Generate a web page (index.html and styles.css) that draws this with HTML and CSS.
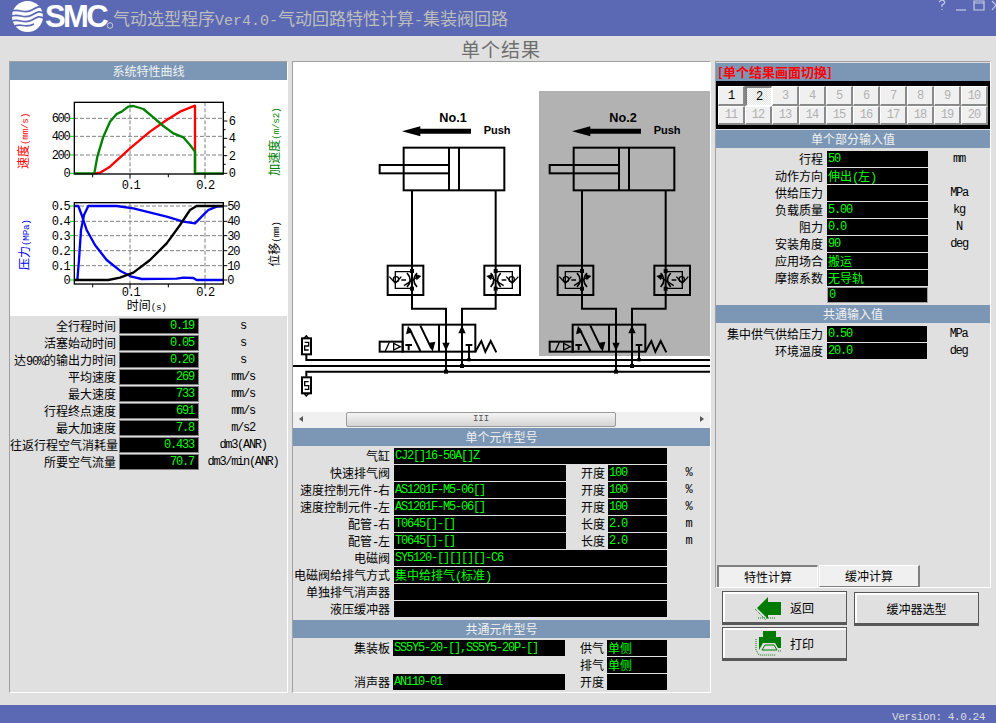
FILE: index.html
```html
<!DOCTYPE html>
<html lang="zh">
<head>
<meta charset="utf-8">
<title>气动选型程序</title>
<link rel="stylesheet" href="styles.css">
</head>
<body>
<header class="titlebar">
  <svg class="logo" width="114" height="34" viewBox="0 0 114 34">
    <circle cx="27.5" cy="16.5" r="15.5" fill="#fff"/>
    <path d="M10 12C18 7 24 15 32 10S40 7 44 8M10 17C18 12 24 20 32 15S40 12 44 13M10 22C18 17 24 25 32 20S40 17 44 18M13 27C20 22 26 29 34 24" fill="none" stroke="#5b69b5" stroke-width="1.7"/>
    <text class="logo-t" x="45" y="27">SMC</text>
    <circle cx="110" cy="25.5" r="2.8" fill="none" stroke="#ccc"/>
  </svg>
  <h1 class="apptitle">气动选型程序<span class="t-l">Ver4.0-</span>气动回路特性计算<span class="t-l">-</span>集装阀回路</h1>
  <svg class="winctl" width="58" height="12" viewBox="0 0 58 12">
    <g fill="none" stroke="#c4cbe6" stroke-width="1.2">
      <path d="M1 2Q4-1 6 1T4 5V7M4 9V10"/>
      <path d="M18 10H28"/>
      <path d="M36 1H46V10H36ZM36 3H46"/>
      <path d="M54 1L58 5M54 10L58 5"/>
    </g>
  </svg>
</header>
<div class="pagetitle">单个结果</div>
<main class="layout">
  <section class="panel">
    <div class="head">系统特性曲线</div>
    <svg class="charts" width="277" height="236" viewBox="30 60 831 708">
      <rect x="30" y="60" width="831" height="708" fill="#fff"/>
      <g class="grid">
        <path d="M222 175H670M222 229H670M222 285H670M390 127V342M615 127V342"/>
        <path d="M222 438H670M222 484H670M222 527H670M222 572H670M222 617H670M390 428V672M615 428V672"/>
      </g>
      <path class="greentick" d="M210 175H222M210 229H222M210 285H222M210 340H222M210 438H222M210 484H222M210 527H222M210 572H222M210 617H222M210 660H222"/>
      <path class="blacktick" d="M670 183H682M670 235H682M670 287H682M670 340H682M670 157H677M670 209H677M670 261H677M670 313H677M278 342V352M390 342V356M505 342V352M615 342V356M670 438H682M670 484H682M670 527H682M670 572H682M670 617H682M670 660H682M278 672V682M390 672V686M505 672V682M615 672V686"/>
      <polyline class="c-red" points="285,340 300,338 330,320 390,265 450,215 500,180 540,155 585,137 585,340"/>
      <polyline class="c-green" points="222,340 283,340 292,290 310,230 330,185 350,162 365,155 385,140 400,138 430,147 460,172 490,198 520,220 550,232 570,255 585,275 585,340 670,340"/>
      <rect class="frame" x="223" y="127" width="447" height="215"/>
      <polyline class="c-blue" points="222,438 235,438 245,465 260,510 285,555 320,600 360,632 395,650 425,657 530,656 550,653 580,654 590,660 670,660"/>
      <polyline class="c-blue" points="232,660 237,600 243,510 252,465 265,438 350,438 400,445 500,470 550,485 585,490 605,470 625,450 650,440 670,438"/>
      <polyline class="c-black" points="222,660 325,660 360,653 400,638 450,600 500,550 540,495 570,450 590,438 670,438"/>
      <rect class="frame" x="223" y="428" width="447" height="244"/>
      <g class="tk" text-anchor="end">
        <text x="208" y="187">600</text><text x="208" y="241">400</text><text x="208" y="297">200</text><text x="208" y="352">0</text>
        <text x="208" y="450">0.5</text><text x="208" y="496">0.4</text><text x="208" y="539">0.3</text><text x="208" y="584">0.2</text><text x="208" y="629">0.1</text><text x="208" y="672">0</text>
      </g>
      <g class="tk">
        <text x="686" y="195">6</text><text x="686" y="247">4</text><text x="686" y="299">2</text><text x="686" y="352">0</text>
        <text x="682" y="450">50</text><text x="682" y="496">40</text><text x="682" y="539">30</text><text x="682" y="584">20</text><text x="682" y="629">10</text><text x="682" y="672">0</text>
      </g>
      <g class="tk" text-anchor="middle">
        <text x="392" y="388">0.1</text><text x="615" y="388">0.2</text>
        <text x="392" y="707">0.1</text><text x="615" y="707">0.2</text>
      </g>
      <text class="axis red" transform="translate(84,327) rotate(-90)">速度<tspan class="ax-l">(mm/s)</tspan></text>
      <text class="axis green" transform="translate(836,347) rotate(-90)">加速度<tspan class="ax-l">(m/s2)</tspan></text>
      <text class="axis blue" transform="translate(86,630) rotate(-90)">压力<tspan class="ax-l">(MPa)</tspan></text>
      <text class="axis" transform="translate(836,620) rotate(-90)">位移<tspan class="ax-l">(mm)</tspan></text>
      <text class="axis" x="380" y="750">时间<tspan class="ax-l">(s)</tspan></text>
    </svg>
    <div class="rows left">
      <div class="row"><span class="lbl">全行程时间</span><span class="box r">0.19</span><span class="unit">s</span></div>
      <div class="row"><span class="lbl">活塞始动时间</span><span class="box r">0.05</span><span class="unit">s</span></div>
      <div class="row"><span class="lbl">达<span class="mn">90%</span>的输出力时间</span><span class="box r">0.20</span><span class="unit">s</span></div>
      <div class="row"><span class="lbl">平均速度</span><span class="box r">269</span><span class="unit">mm/s</span></div>
      <div class="row"><span class="lbl">最大速度</span><span class="box r">733</span><span class="unit">mm/s</span></div>
      <div class="row"><span class="lbl">行程终点速度</span><span class="box r">691</span><span class="unit">mm/s</span></div>
      <div class="row"><span class="lbl">最大加速度</span><span class="box r">7.8</span><span class="unit">m/s2</span></div>
      <div class="row"><span class="lbl">往返行程空气消耗量</span><span class="box r">0.433</span><span class="unit">dm3(ANR)</span></div>
      <div class="row"><span class="lbl">所要空气流量</span><span class="box r">70.7</span><span class="unit">dm3/min(ANR)</span></div>
    </div>
  </section>

  <section class="panel">
    <svg class="diagram" width="417" height="350" viewBox="3 -69 1251 1050">
      <defs>
        <g id="ctrl">
          <rect x="287" y="542" width="107" height="88"/>
          <path d="M360 560H310V610H360" class="thin"/>
          <path d="M292 575L310 595L328 575" class="thin"/>
          <circle cx="312" cy="583" r="8" class="thin"/>
          <path d="M328 585H342M345 564Q364 585 345 606M375 564Q356 585 375 606" class="med"/>
          <path d="M336 602L376 576" class="thin"/>
          <path d="M388 573L368 566L374 586Z" class="fill"/>
          <rect x="354" y="552" width="12" height="12" class="fill"/>
          <rect x="354" y="605" width="12" height="12" class="fill"/>
        </g>
        <g id="unit">
          <path d="M370 139H537" class="bold"/>
          <path d="M330 139L385 124V154Z" class="fill"/>
          <rect x="335" y="188" width="302" height="128"/>
          <path d="M471 188V316M501 188V316"/>
          <rect x="263" y="240" width="208" height="25"/>
          <path d="M360 316V671H462V860M611 316V671H510V843"/>
          <use href="#ctrl"/>
          <use href="#ctrl" transform="translate(971,0) scale(-1,1)"/>
          <rect x="332" y="719" width="218" height="81"/>
          <path d="M441 719V800"/>
          <path d="M352 730L385 798M385 722L418 790M350 778V796M340 780H360"/>
          <path d="M348 722L342 748L362 742Z" class="fill"/>
          <path d="M422 800L408 774L430 770Z" class="fill"/>
          <path d="M451 773H473L462 798Z" class="fill"/>
          <path d="M499 745H521L510 721Z" class="fill"/>
          <path d="M531 780V825M521 780H541"/>
          <rect x="263" y="770" width="69" height="30"/>
          <path d="M280 798L292 772M305 775L325 785L305 795Z" class="thin"/>
          <path d="M550 800L568 768L580 800L596 768L613 802"/>
          <rect x="456" y="854" width="12" height="12" class="fill"/>
          <rect x="504" y="837" width="12" height="12" class="fill"/>
          <rect x="526" y="819" width="10" height="10" class="fill"/>
        </g>
        <g id="muffler">
          <rect x="30" y="760" width="27" height="48"/>
          <path d="M43 752L36 760H50ZM38 772H50V783H38V795H50" class="thin"/>
        </g>
      </defs>
      <rect x="3" y="-69" width="1251" height="1050" fill="#fff"/>
      <rect x="741" y="18" width="513" height="795" fill="#b2b2b2"/>
      <g class="dg">
        <use href="#unit"/>
        <use href="#unit" x="510"/>
        <path d="M3 843H1254M43 808V825H1254M43 875V860H1254"/>
        <use href="#muffler"/>
        <use href="#muffler" transform="translate(0,1685) scale(1,-1)"/>
      </g>
      <text class="dno" x="442" y="110">No.1</text>
      <text class="dpush" x="575" y="148">Push</text>
      <text class="dno" x="952" y="110">No.2</text>
      <text class="dpush" x="1085" y="148">Push</text>
    </svg>
    <div class="scroll">
      <span class="arr arr-l"></span>
      <div class="thumb">III</div>
      <span class="arr arr-r"></span>
    </div>
    <div class="head">单个元件型号</div>
    <div class="rows mid">
      <div class="row"><span class="lbl">气缸</span><span class="box long">CJ2[]16-50A[]Z</span></div>
      <div class="row"><span class="lbl">快速排气阀</span><span class="box short"></span><span class="lbl2">开度</span><span class="box s2">100</span><span class="unit">%</span></div>
      <div class="row"><span class="lbl">速度控制元件<span class="mn">-</span>右</span><span class="box short">AS1201F-M5-06[]</span><span class="lbl2">开度</span><span class="box s2">100</span><span class="unit">%</span></div>
      <div class="row"><span class="lbl">速度控制元件<span class="mn">-</span>左</span><span class="box short">AS1201F-M5-06[]</span><span class="lbl2">开度</span><span class="box s2">100</span><span class="unit">%</span></div>
      <div class="row"><span class="lbl">配管<span class="mn">-</span>右</span><span class="box short">T0645[]-[]</span><span class="lbl2">长度</span><span class="box s2">2.0</span><span class="unit">m</span></div>
      <div class="row"><span class="lbl">配管<span class="mn">-</span>左</span><span class="box short">T0645[]-[]</span><span class="lbl2">长度</span><span class="box s2">2.0</span><span class="unit">m</span></div>
      <div class="row"><span class="lbl">电磁阀</span><span class="box long">SY5120-[][][][]-C6</span></div>
      <div class="row"><span class="lbl">电磁阀给排气方式</span><span class="box long cn">集中给排气<span class="mn">(</span>标准<span class="mn">)</span></span></div>
      <div class="row"><span class="lbl">单独排气消声器</span><span class="box long"></span></div>
      <div class="row"><span class="lbl">液压缓冲器</span><span class="box long"></span></div>
    </div>
    <div class="head head-gap">共通元件型号</div>
    <div class="rows mid common">
      <div class="row"><span class="lbl">集装板</span><span class="box short">SS5Y5-20-[],SS5Y5-20P-[]</span><span class="lbl2">供气</span><span class="box s2 cn">单侧</span></div>
      <div class="row"><span class="lbl"></span><span class="blank"></span><span class="lbl2">排气</span><span class="box s2 cn">单侧</span></div>
      <div class="row"><span class="lbl">消声器</span><span class="box short">AN110-01</span><span class="lbl2">开度</span><span class="box s2"></span></div>
    </div>
  </section>

  <div class="rightcol">
    <section class="panel panel-r">
      <div class="redhead">[单个结果画面切换]</div>
      <div class="switch">
        <button class="num on">1</button><button class="num on pressed">2</button><button class="num">3</button><button class="num">4</button><button class="num">5</button><button class="num">6</button><button class="num">7</button><button class="num">8</button><button class="num">9</button><button class="num">10</button>
        <button class="num">11</button><button class="num">12</button><button class="num">13</button><button class="num">14</button><button class="num">15</button><button class="num">16</button><button class="num">17</button><button class="num">18</button><button class="num">19</button><button class="num">20</button>
      </div>
      <div class="head">单个部分输入值</div>
      <div class="rows right">
        <div class="row"><span class="lbl">行程</span><span class="box">50</span><span class="unit">mm</span></div>
        <div class="row"><span class="lbl">动作方向</span><span class="box cn">伸出<span class="mn">(</span>左<span class="mn">)</span></span></div>
        <div class="row"><span class="lbl">供给压力</span><span class="box"></span><span class="unit">MPa</span></div>
        <div class="row"><span class="lbl">负载质量</span><span class="box">5.00</span><span class="unit">kg</span></div>
        <div class="row"><span class="lbl">阻力</span><span class="box">0.0</span><span class="unit">N</span></div>
        <div class="row"><span class="lbl">安装角度</span><span class="box">90</span><span class="unit">deg</span></div>
        <div class="row"><span class="lbl">应用场合</span><span class="box cn">搬运</span></div>
        <div class="row"><span class="lbl">摩擦系数</span><span class="box cn">无导轨</span></div>
        <div class="row"><span class="lbl"></span><span class="box inset">0</span></div>
      </div>
      <div class="head">共通输入值</div>
      <div class="rows right common-r">
        <div class="row"><span class="lbl">集中供气供给压力</span><span class="box b100">0.50</span><span class="unit">MPa</span></div>
        <div class="row"><span class="lbl">环境温度</span><span class="box b100">20.0</span><span class="unit">deg</span></div>
      </div>
      <div class="tabs">
        <button class="tab pressed">特性计算</button>
        <button class="tab">缓冲计算</button>
      </div>
    </section>
    <div class="actions">
      <div class="actcol">
        <button class="act">
          <svg width="28" height="26" viewBox="0 0 28 26">
            <path d="M3 14L14 3V8H27V21H14V25Z" fill="#007a00"/>
            <path d="M1 15L13 27M4 24H22" stroke="#007a00" stroke-dasharray="1 1" fill="none"/>
          </svg>
          <span>返回</span>
        </button>
        <button class="act">
          <svg width="28" height="26" viewBox="0 0 28 26">
            <rect x="9" y="1" width="13" height="6" fill="#007a00"/>
            <path d="M5 7H27V18H24L21 13H9L5 20Z" fill="#007a00"/>
            <path d="M8 20L11 15H20L23 20Z" fill="none" stroke="#007a00"/>
            <path d="M2 9V20L5 25H22M24 21H27" stroke="#007a00" stroke-dasharray="1 1" fill="none"/>
          </svg>
          <span>打印</span>
        </button>
      </div>
      <button class="act act-c">缓冲器选型</button>
    </div>
  </div>
</main>
<footer class="footer">Version: 4.0.24</footer>
</body>
</html>
```

FILE: styles.css
```css
* { box-sizing: border-box; }
html, body { margin: 0; padding: 0; }
body {
  width: 996px;
  height: 723px;
  overflow: hidden;
  display: flex;
  flex-direction: column;
  background: #e0e0e0;
  color: #000;
  font-family: "Noto Sans CJK SC", sans-serif;
  font-size: 12px;
  line-height: 16px;
}
svg { display: block; }
button { font-family: inherit; padding: 0; }

.titlebar {
  height: 36px;
  flex: none;
  background: #5b69b5;
  display: flex;
  align-items: flex-start;
}
.logo { flex: none; margin-top: 0; }
.logo-t {
  font-family: "Liberation Sans", sans-serif;
  font-weight: 700;
  font-size: 31px;
  letter-spacing: -2.6px;
  fill: #fff;
}
.apptitle {
  margin: 0 0 0 -1px;
  font-size: 17px;
  font-weight: 400;
  line-height: 36px;
  color: #bdbdbd;
  white-space: nowrap;
}
.t-l {
  font-family: "Liberation Mono", monospace;
  font-size: 15px;
}
.winctl { margin-left: auto; flex: none; }

.pagetitle {
  height: 25px;
  flex: none;
  text-align: center;
  font-size: 19px;
  line-height: 26px;
  letter-spacing: 1px;
  color: #6e6e6e;
  padding-left: 6px;
}
.layout {
  height: 632px;
  flex: none;
  display: grid;
  grid-template-columns: 279px 419px 276px;
  gap: 4px;
  padding-left: 9px;
}
.panel {
  border: 1px solid;
  border-color: #a0a0a0 #fff #fff #a0a0a0;
  display: flex;
  flex-direction: column;
  min-width: 0;
}
.head {
  height: 18px;
  flex: none;
  background: #7b97b5;
  color: #f2f2f2;
  text-align: center;
  font-size: 12px;
  line-height: 18px;
}
.head-gap { margin-top: 2px; }

.rows { flex: none; padding-top: 2px; }
.row {
  display: flex;
  height: 16px;
  margin-bottom: 1px;
}
.lbl {
  flex: none;
  text-align: right;
  white-space: nowrap;
  line-height: 16px;
}
.mn {
  font-family: "Liberation Mono", monospace;
  font-size: 12px;
  letter-spacing: -1.2px;
}
.box {
  flex: none;
  display: block;
  background: #000;
  color: #00ff00;
  font-family: "Liberation Mono", monospace;
  font-size: 12px;
  letter-spacing: -1.2px;
  line-height: 16px;
  padding-left: 1px;
  white-space: nowrap;
  overflow: hidden;
}
.box.cn {
  font-family: "Noto Sans CJK SC", sans-serif;
  letter-spacing: 0;
}
.box.cn .mn { font-size: 12px; letter-spacing: -1.2px; }
.box.r {
  text-align: right;
  padding-right: 4px;
  border: 1px solid #808080;
  line-height: 14px;
}
.unit {
  flex: 1;
  text-align: center;
  font-family: "Liberation Mono", monospace;
  font-size: 12px;
  letter-spacing: -1.3px;
  white-space: nowrap;
}
.blank { flex: none; width: 172px; }

.left .lbl { width: 106px; margin-right: 3px; }
.left .box { width: 80px; }

.mid .lbl { width: 97px; margin-right: 4px; }
.mid .long { width: 273px; }
.mid .short { width: 172px; }
.lbl2 {
  flex: none;
  width: 39px;
  margin-right: 3px;
  text-align: right;
}
.mid .s2 { width: 59px; }
.common { padding-top: 2px; }
.common .lbl { width: 97px; margin-right: 3px; }
.common .s2 { width: 60px; }

.rightcol { display: flex; flex-direction: column; }
.panel-r { height: 527px; flex: none; }
.redhead {
  height: 18px;
  flex: none;
  margin-top: 1px;
  background: #7b97b5;
  color: #f00;
  font-weight: 700;
  font-size: 13px;
  line-height: 18px;
  padding-left: 2px;
}
.switch {
  height: 48px;
  flex: none;
  background: #000;
  margin-bottom: 1px;
  padding: 5px 2px 4px;
  display: grid;
  grid-template-columns: repeat(10, 27px);
  grid-template-rows: 20px 19px;
}
.num {
  border: 1px solid;
  border-color: #fff #8a8a8a #8a8a8a #fff;
  border-width: 1px 2px 2px 1px;
  background: #f0f0f0;
  color: #b0b0b0;
  font-family: "Liberation Mono", monospace;
  font-size: 12px;
  letter-spacing: -1px;
  line-height: 14px;
}
.num.on { color: #000; }
.pressed {
  background: repeating-conic-gradient(#fff 0 25%, #e4e4e4 0 50%) 0 0 / 2px 2px;
}
.num.pressed { border-color: #808080 #fff #fff #808080; border-width: 2px 1px 1px 2px; }

.right { padding-top: 3px; }
.right .lbl { width: 107px; margin-right: 4px; }
.right .box { width: 101px; }
.right .box.b100 { width: 100px; }
.right .inset {
  border: 1px solid #a0a0a0;
  line-height: 14px;
  margin-bottom: 0;
}
.right .row:nth-child(9) { margin-bottom: 2px; }
.common-r { padding-top: 3px; }

.tabs {
  margin-top: auto;
  display: flex;
  gap: 1px;
  padding-left: 1px;
}
.tab {
  width: 101px;
  height: 22px;
  border: 1px solid;
  border-color: #fff #808080 #808080 #fff;
  border-width: 1px 2px 1px 1px;
  background: #f0f0f0;
  font-size: 12px;
  line-height: 20px;
  color: #000;
}
.tab.pressed { border-color: #808080 #fff #fff #808080; border-width: 2px 1px 0 2px; }

.actions {
  display: flex;
  gap: 7px;
  padding: 3px 0 0 7px;
}
.actcol { display: flex; flex-direction: column; gap: 2px; }
.act {
  width: 125px;
  height: 34px;
  background: #e0e0e0;
  border: 1px solid #585858;
  border-bottom-width: 3px;
  box-shadow: inset 2px 2px 0 #fff;
  font-size: 12px;
  color: #000;
  display: flex;
  align-items: center;
  gap: 8px;
  padding-left: 31px;
}
.act-c {
  justify-content: center;
  padding-left: 0;
  margin-top: 1px;
}

.scroll {
  height: 16px;
  flex: none;
  background: #f0f0f0;
  position: relative;
  display: flex;
  align-items: center;
}
.thumb {
  position: absolute;
  left: 53px;
  top: 0;
  width: 270px;
  height: 15px;
  border: 1px solid #9a9a9a;
  border-radius: 2px;
  background: linear-gradient(#f4f4f4, #d4d4d4);
  text-align: center;
  font-family: "Liberation Mono", monospace;
  font-size: 9px;
  line-height: 13px;
  color: #555;
}
.arr { width: 0; height: 0; border-style: solid; position: absolute; top: 4px; }
.arr-l { left: 6px; border-width: 3.5px 4px 3.5px 0; border-color: transparent #555 transparent transparent; }
.arr-r { right: 6px; border-width: 3.5px 0 3.5px 4px; border-color: transparent transparent transparent #555; }

.footer {
  margin-top: 12px;
  height: 18px;
  flex: none;
  background: #5b69b5;
  color: #dcdcdc;
  font-family: "Liberation Mono", monospace;
  font-size: 11px;
  letter-spacing: -0.4px;
  line-height: 24px;
  text-align: right;
  padding-right: 11px;
  overflow: hidden;
}

/* chart */
.charts { flex: none; }
.grid { fill: none; stroke: #808080; stroke-width: 3; stroke-dasharray: 12 6; }
.greentick { fill: none; stroke: #00e000; stroke-width: 3; }
.blacktick { fill: none; stroke: #000; stroke-width: 3; }
.frame { fill: none; stroke: #000; stroke-width: 4; }
.c-red, .c-green, .c-blue, .c-black { fill: none; stroke-width: 7; stroke-linejoin: round; }
.c-red { stroke: #f00; }
.c-green { stroke: #008000; }
.c-blue { stroke: #0000f0; }
.c-black { stroke: #000; }
.tk {
  font-family: "Liberation Mono", monospace;
  font-size: 36px;
  letter-spacing: -4px;
  fill: #000;
}
.axis {
  font-family: "Noto Sans CJK SC", sans-serif;
  font-size: 36px;
  fill: #000;
}
.axis.red { fill: #f00; }
.axis.green { fill: #008000; }
.axis.blue { fill: #0000f0; }
.ax-l {
  font-family: "Liberation Mono", monospace;
  font-size: 28px;
  letter-spacing: -0.8px;
}

/* circuit diagram */
.diagram { flex: none; }
.dg { fill: none; stroke: #000; stroke-width: 6; }
.thin { stroke-width: 4; }
.med { stroke-width: 5; }
.bold { stroke-width: 15; }
.fill { fill: #000; stroke: none; }
.dno {
  font-family: "Liberation Sans", sans-serif;
  font-weight: 700;
  font-size: 38px;
  fill: #000;
}
.dpush {
  font-family: "Liberation Sans", sans-serif;
  font-weight: 700;
  font-size: 33px;
  fill: #000;
}
```
